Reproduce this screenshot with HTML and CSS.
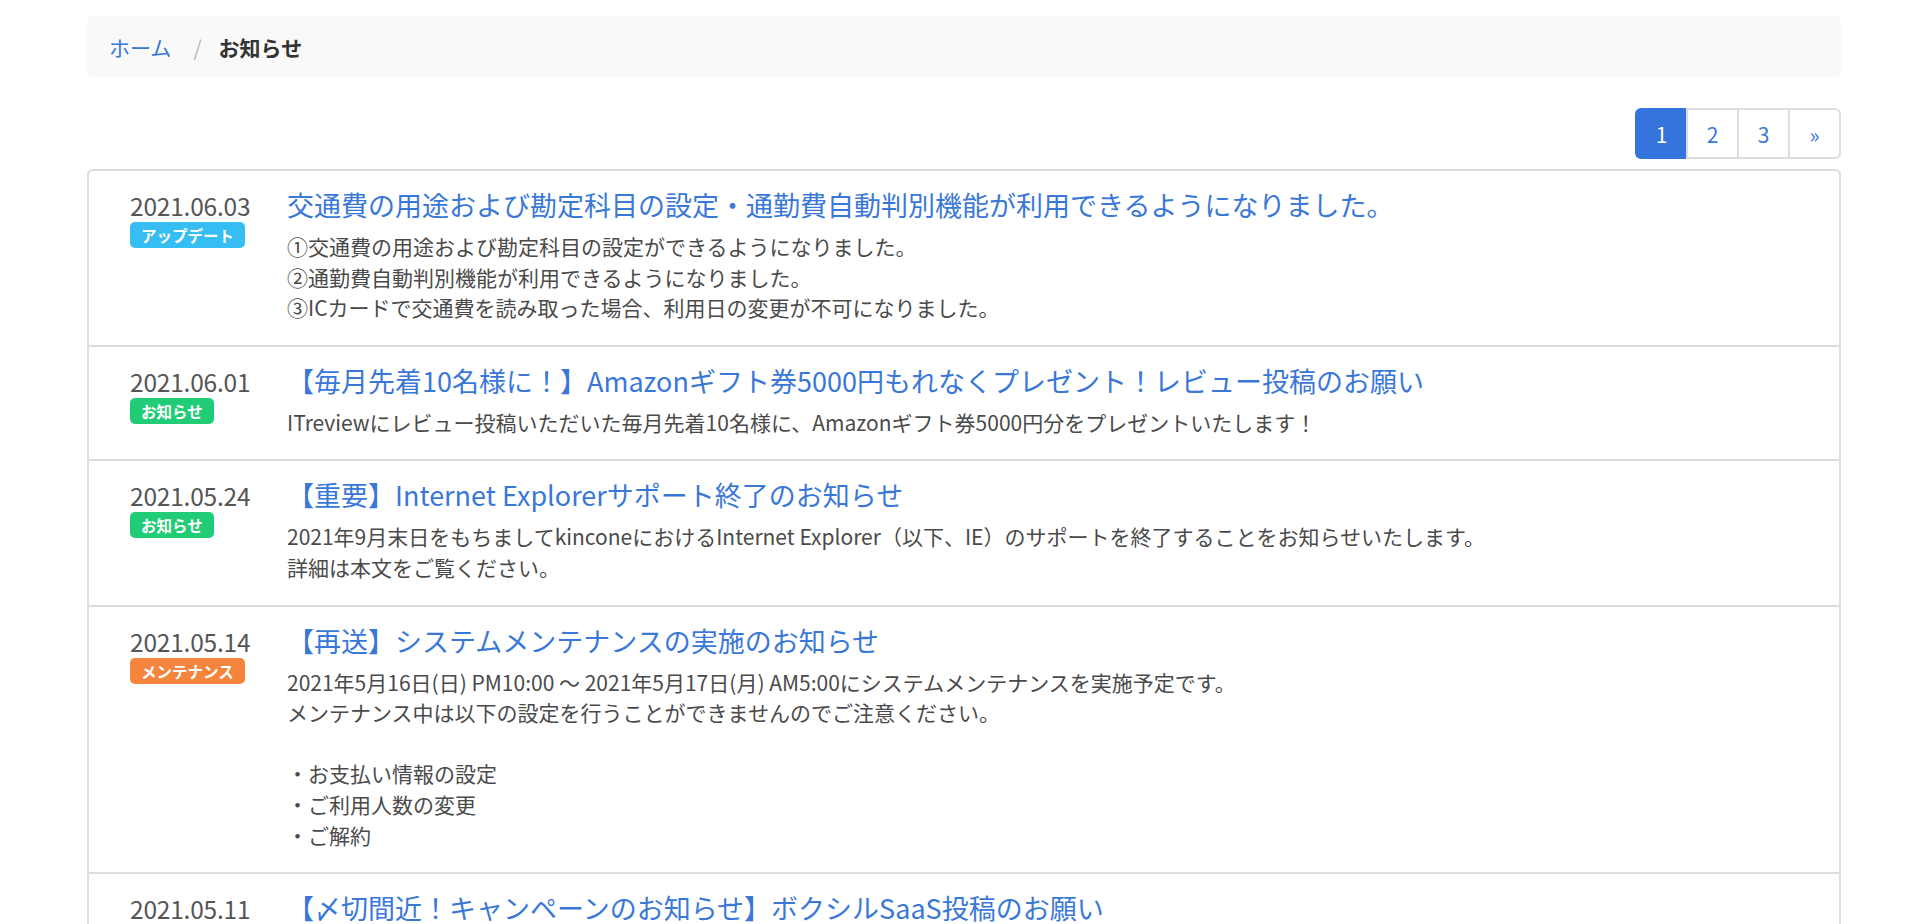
FILE: index.html
```html
<!DOCTYPE html>
<html lang="ja">
<head>
<meta charset="utf-8">
<title>お知らせ</title>
<link rel="stylesheet" href="styles.css">
</head>
<body>
<div class="container">
  <nav class="breadcrumb">
    <a class="crumb-link" href="#">ホーム</a>
    <span class="sep">/</span>
    <span class="crumb-current">お知らせ</span>
  </nav>

  <div class="pager-row">
    <ul class="pagination">
      <li class="page active">1</li>
      <li class="page">2</li>
      <li class="page">3</li>
      <li class="page last">»</li>
    </ul>
  </div>

  <div class="card">
    <div class="item">
      <div class="meta">
        <div class="date">2021.06.03</div>
        <span class="badge badge-update">アップデート</span>
      </div>
      <div class="content">
        <a class="title" href="#">交通費の用途および勘定科目の設定・通勤費自動判別機能が利用できるようになりました。</a>
        <p class="body">①交通費の用途および勘定科目の設定ができるようになりました。<br>②通勤費自動判別機能が利用できるようになりました。<br>③ICカードで交通費を読み取った場合、利用日の変更が不可になりました。</p>
      </div>
    </div>
    <div class="item">
      <div class="meta">
        <div class="date">2021.06.01</div>
        <span class="badge badge-news">お知らせ</span>
      </div>
      <div class="content">
        <a class="title" href="#">【毎月先着10名様に！】Amazonギフト券5000円もれなくプレゼント！レビュー投稿のお願い</a>
        <p class="body">ITreviewにレビュー投稿いただいた毎月先着10名様に、Amazonギフト券5000円分をプレゼントいたします！</p>
      </div>
    </div>
    <div class="item">
      <div class="meta">
        <div class="date">2021.05.24</div>
        <span class="badge badge-news">お知らせ</span>
      </div>
      <div class="content">
        <a class="title" href="#">【重要】Internet Explorerサポート終了のお知らせ</a>
        <p class="body">2021年9月末日をもちましてkinconeにおけるInternet Explorer（以下、IE）のサポートを終了することをお知らせいたします。<br>詳細は本文をご覧ください。</p>
      </div>
    </div>
    <div class="item">
      <div class="meta">
        <div class="date">2021.05.14</div>
        <span class="badge badge-maint">メンテナンス</span>
      </div>
      <div class="content">
        <a class="title" href="#">【再送】システムメンテナンスの実施のお知らせ</a>
        <p class="body">2021年5月16日(日) PM10:00 ～ 2021年5月17日(月) AM5:00にシステムメンテナンスを実施予定です。<br>メンテナンス中は以下の設定を行うことができませんのでご注意ください。<br><br>・お支払い情報の設定<br>・ご利用人数の変更<br>・ご解約</p>
      </div>
    </div>
    <div class="item">
      <div class="meta">
        <div class="date">2021.05.11</div>
      </div>
      <div class="content">
        <a class="title" href="#">【〆切間近！キャンペーンのお知らせ】ボクシルSaaS投稿のお願い</a>
      </div>
    </div>
  </div>
</div>
</body>
</html>
```

FILE: styles.css
```css
html, body {
  margin: 0;
  padding: 0;
  background: #ffffff;
}

body {
  font-family: "Noto Sans CJK JP", "Noto Sans", sans-serif;
  color: #4a4a4a;
  font-size: 21px;
}

a {
  text-decoration: none;
}

.container {
  width: 1754px;
  margin-left: 87px;
  padding-top: 16px;
}

.breadcrumb {
  height: 61px;
  box-sizing: border-box;
  background: #f9f9f9;
  border-radius: 6px;
  display: flex;
  align-items: center;
  padding: 0 22px;
  font-size: 21px;
}

.crumb-link {
  color: #3a78d8;
}

.sep {
  color: #b8b8b8;
  padding: 0 17px 0 22px;
}

.crumb-current {
  font-weight: bold;
  color: #333333;
}

.pager-row {
  display: flex;
  justify-content: flex-end;
  margin-top: 31px;
  margin-bottom: 10px;
}

.pagination {
  display: flex;
  list-style: none;
  margin: 0;
  padding: 0;
}

.page {
  width: 53px;
  height: 51px;
  box-sizing: border-box;
  border: 2px solid #dddddd;
  margin-left: -2px;
  display: flex;
  align-items: center;
  justify-content: center;
  color: #3a78d8;
  font-size: 21px;
  background: #ffffff;
}

.page.active {
  background: #3474dc;
  border-color: #3474dc;
  color: #ffffff;
  border-radius: 6px 0 0 6px;
  margin-left: 0;
}

.page.last {
  border-radius: 0 6px 6px 0;
}

.card {
  border: 2px solid #dddddd;
  border-radius: 6px;
  overflow: hidden;
}

.item {
  display: flex;
  padding: 16px 20px 22px 41px;
  border-top: 2px solid #dddddd;
}

.item:first-child {
  border-top: none;
}

.meta {
  width: 122px;
  flex: none;
  margin-right: 35px;
  padding-top: 4px;
}

.date {
  font-size: 24.5px;
  line-height: 30px;
  color: #555555;
  letter-spacing: -0.2px;
}

.badge {
  display: inline-block;
  margin-top: 1px;
  height: 26px;
  line-height: 26px;
  padding: 0 11px;
  border-radius: 5px;
  font-size: 15.5px;
  font-weight: bold;
  color: #ffffff;
  vertical-align: top;
}

.badge-update {
  background: #36bdf2;
}

.badge-news {
  background: #20cc76;
}

.badge-maint {
  background: #f5843d;
}

.content {
  flex: 1;
  min-width: 0;
}

.title {
  display: block;
  font-size: 27px;
  line-height: 36px;
  color: #3a78d8;
}

.body {
  margin: 8px 0 0;
  font-size: 21px;
  line-height: 30.6px;
  color: #4a4a4a;
}
```
